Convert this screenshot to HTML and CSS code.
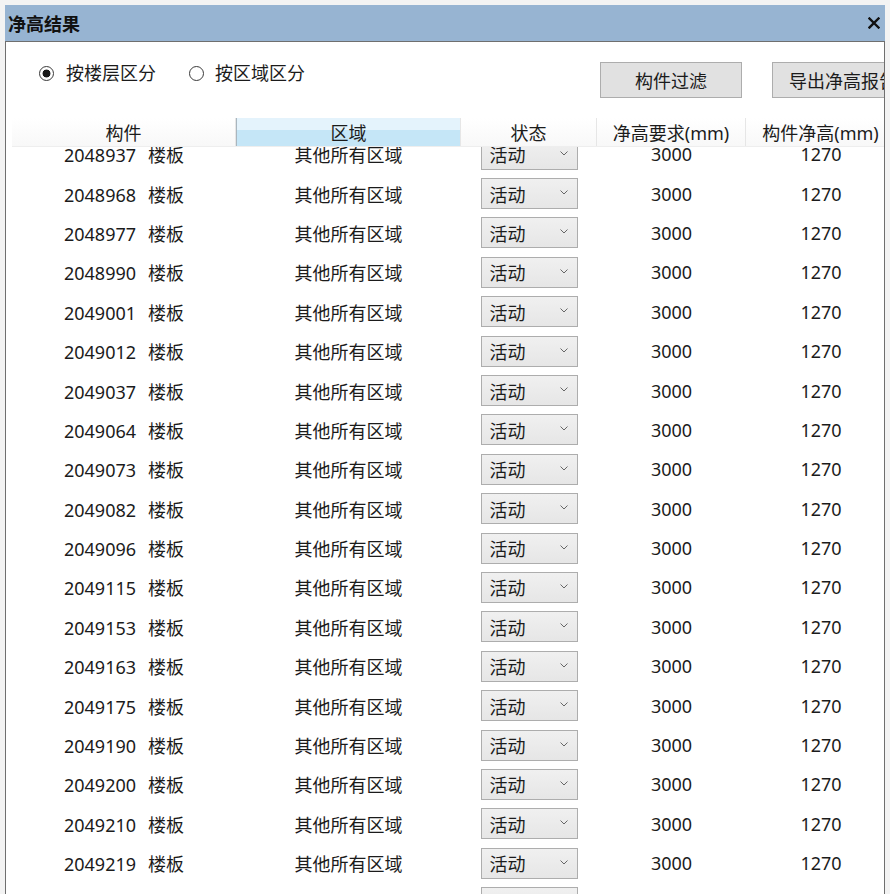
FILE: index.html
```html
<!DOCTYPE html>
<html lang="zh-CN">
<head>
<meta charset="utf-8">
<title>净高结果</title>
<link rel="stylesheet" href="styles.css">
</head>
<body>
<div class="window">
  <div class="titlebar">
    <span class="title">净高结果</span>
    <svg class="close" width="12" height="12" viewBox="0 0 12 12"><path d="M1.5 1.5L10.5 10.5M10.5 1.5L1.5 10.5" stroke="#111" stroke-width="2.4" stroke-linecap="square" fill="none"/></svg>
  </div>
  <div class="content">
    <div class="toolbar">
      <div class="radios">
        <label class="radio"><span class="dot checked"></span>按楼层区分</label>
        <label class="radio"><span class="dot"></span>按区域区分</label>
      </div>
      <div class="buttons">
        <button class="btn">构件过滤</button>
        <button class="btn">导出净高报告</button>
      </div>
    </div>
    <div class="thead">
      <div class="th">构件</div>
      <div class="th active">区域</div>
      <div class="th">状态</div>
      <div class="th">净高要求(mm)</div>
      <div class="th">构件净高(mm)</div>
    </div>
    <div class="tbody">
      <div class="rows">
        <div class="row"><div class="c"><span>2048937</span><span class="kind">楼板</span></div><div class="c">其他所有区域</div><div class="c"><div class="select"><span>活动</span><svg width="8" height="5" viewBox="0 0 8 5"><path d="M0.5 0.5L4 4L7.5 0.5" stroke="#666" stroke-width="1" fill="none"/></svg></div></div><div class="c">3000</div><div class="c">1270</div></div>
        <div class="row"><div class="c"><span>2048968</span><span class="kind">楼板</span></div><div class="c">其他所有区域</div><div class="c"><div class="select"><span>活动</span><svg width="8" height="5" viewBox="0 0 8 5"><path d="M0.5 0.5L4 4L7.5 0.5" stroke="#666" stroke-width="1" fill="none"/></svg></div></div><div class="c">3000</div><div class="c">1270</div></div>
        <div class="row"><div class="c"><span>2048977</span><span class="kind">楼板</span></div><div class="c">其他所有区域</div><div class="c"><div class="select"><span>活动</span><svg width="8" height="5" viewBox="0 0 8 5"><path d="M0.5 0.5L4 4L7.5 0.5" stroke="#666" stroke-width="1" fill="none"/></svg></div></div><div class="c">3000</div><div class="c">1270</div></div>
        <div class="row"><div class="c"><span>2048990</span><span class="kind">楼板</span></div><div class="c">其他所有区域</div><div class="c"><div class="select"><span>活动</span><svg width="8" height="5" viewBox="0 0 8 5"><path d="M0.5 0.5L4 4L7.5 0.5" stroke="#666" stroke-width="1" fill="none"/></svg></div></div><div class="c">3000</div><div class="c">1270</div></div>
        <div class="row"><div class="c"><span>2049001</span><span class="kind">楼板</span></div><div class="c">其他所有区域</div><div class="c"><div class="select"><span>活动</span><svg width="8" height="5" viewBox="0 0 8 5"><path d="M0.5 0.5L4 4L7.5 0.5" stroke="#666" stroke-width="1" fill="none"/></svg></div></div><div class="c">3000</div><div class="c">1270</div></div>
        <div class="row"><div class="c"><span>2049012</span><span class="kind">楼板</span></div><div class="c">其他所有区域</div><div class="c"><div class="select"><span>活动</span><svg width="8" height="5" viewBox="0 0 8 5"><path d="M0.5 0.5L4 4L7.5 0.5" stroke="#666" stroke-width="1" fill="none"/></svg></div></div><div class="c">3000</div><div class="c">1270</div></div>
        <div class="row"><div class="c"><span>2049037</span><span class="kind">楼板</span></div><div class="c">其他所有区域</div><div class="c"><div class="select"><span>活动</span><svg width="8" height="5" viewBox="0 0 8 5"><path d="M0.5 0.5L4 4L7.5 0.5" stroke="#666" stroke-width="1" fill="none"/></svg></div></div><div class="c">3000</div><div class="c">1270</div></div>
        <div class="row"><div class="c"><span>2049064</span><span class="kind">楼板</span></div><div class="c">其他所有区域</div><div class="c"><div class="select"><span>活动</span><svg width="8" height="5" viewBox="0 0 8 5"><path d="M0.5 0.5L4 4L7.5 0.5" stroke="#666" stroke-width="1" fill="none"/></svg></div></div><div class="c">3000</div><div class="c">1270</div></div>
        <div class="row"><div class="c"><span>2049073</span><span class="kind">楼板</span></div><div class="c">其他所有区域</div><div class="c"><div class="select"><span>活动</span><svg width="8" height="5" viewBox="0 0 8 5"><path d="M0.5 0.5L4 4L7.5 0.5" stroke="#666" stroke-width="1" fill="none"/></svg></div></div><div class="c">3000</div><div class="c">1270</div></div>
        <div class="row"><div class="c"><span>2049082</span><span class="kind">楼板</span></div><div class="c">其他所有区域</div><div class="c"><div class="select"><span>活动</span><svg width="8" height="5" viewBox="0 0 8 5"><path d="M0.5 0.5L4 4L7.5 0.5" stroke="#666" stroke-width="1" fill="none"/></svg></div></div><div class="c">3000</div><div class="c">1270</div></div>
        <div class="row"><div class="c"><span>2049096</span><span class="kind">楼板</span></div><div class="c">其他所有区域</div><div class="c"><div class="select"><span>活动</span><svg width="8" height="5" viewBox="0 0 8 5"><path d="M0.5 0.5L4 4L7.5 0.5" stroke="#666" stroke-width="1" fill="none"/></svg></div></div><div class="c">3000</div><div class="c">1270</div></div>
        <div class="row"><div class="c"><span>2049115</span><span class="kind">楼板</span></div><div class="c">其他所有区域</div><div class="c"><div class="select"><span>活动</span><svg width="8" height="5" viewBox="0 0 8 5"><path d="M0.5 0.5L4 4L7.5 0.5" stroke="#666" stroke-width="1" fill="none"/></svg></div></div><div class="c">3000</div><div class="c">1270</div></div>
        <div class="row"><div class="c"><span>2049153</span><span class="kind">楼板</span></div><div class="c">其他所有区域</div><div class="c"><div class="select"><span>活动</span><svg width="8" height="5" viewBox="0 0 8 5"><path d="M0.5 0.5L4 4L7.5 0.5" stroke="#666" stroke-width="1" fill="none"/></svg></div></div><div class="c">3000</div><div class="c">1270</div></div>
        <div class="row"><div class="c"><span>2049163</span><span class="kind">楼板</span></div><div class="c">其他所有区域</div><div class="c"><div class="select"><span>活动</span><svg width="8" height="5" viewBox="0 0 8 5"><path d="M0.5 0.5L4 4L7.5 0.5" stroke="#666" stroke-width="1" fill="none"/></svg></div></div><div class="c">3000</div><div class="c">1270</div></div>
        <div class="row"><div class="c"><span>2049175</span><span class="kind">楼板</span></div><div class="c">其他所有区域</div><div class="c"><div class="select"><span>活动</span><svg width="8" height="5" viewBox="0 0 8 5"><path d="M0.5 0.5L4 4L7.5 0.5" stroke="#666" stroke-width="1" fill="none"/></svg></div></div><div class="c">3000</div><div class="c">1270</div></div>
        <div class="row"><div class="c"><span>2049190</span><span class="kind">楼板</span></div><div class="c">其他所有区域</div><div class="c"><div class="select"><span>活动</span><svg width="8" height="5" viewBox="0 0 8 5"><path d="M0.5 0.5L4 4L7.5 0.5" stroke="#666" stroke-width="1" fill="none"/></svg></div></div><div class="c">3000</div><div class="c">1270</div></div>
        <div class="row"><div class="c"><span>2049200</span><span class="kind">楼板</span></div><div class="c">其他所有区域</div><div class="c"><div class="select"><span>活动</span><svg width="8" height="5" viewBox="0 0 8 5"><path d="M0.5 0.5L4 4L7.5 0.5" stroke="#666" stroke-width="1" fill="none"/></svg></div></div><div class="c">3000</div><div class="c">1270</div></div>
        <div class="row"><div class="c"><span>2049210</span><span class="kind">楼板</span></div><div class="c">其他所有区域</div><div class="c"><div class="select"><span>活动</span><svg width="8" height="5" viewBox="0 0 8 5"><path d="M0.5 0.5L4 4L7.5 0.5" stroke="#666" stroke-width="1" fill="none"/></svg></div></div><div class="c">3000</div><div class="c">1270</div></div>
        <div class="row"><div class="c"><span>2049219</span><span class="kind">楼板</span></div><div class="c">其他所有区域</div><div class="c"><div class="select"><span>活动</span><svg width="8" height="5" viewBox="0 0 8 5"><path d="M0.5 0.5L4 4L7.5 0.5" stroke="#666" stroke-width="1" fill="none"/></svg></div></div><div class="c">3000</div><div class="c">1270</div></div>
        <div class="row"><div class="c"><span>2049232</span><span class="kind">楼板</span></div><div class="c">其他所有区域</div><div class="c"><div class="select"><span>活动</span><svg width="8" height="5" viewBox="0 0 8 5"><path d="M0.5 0.5L4 4L7.5 0.5" stroke="#666" stroke-width="1" fill="none"/></svg></div></div><div class="c">3000</div><div class="c">1270</div></div>
      </div>
    </div>
  </div>
</div>
</body>
</html>
```

FILE: styles.css
```css
html, body {
  margin: 0;
  height: 100%;
  overflow: hidden;
}

body {
  box-sizing: border-box;
  height: 894px;
  padding: 5px 0 0 5px;
  background: #f3f3f3;
  font-family: "Noto Sans", "Noto Sans CJK SC", sans-serif;
  color: #1b1b1b;
}

.window {
  width: 880px;
  height: 889px;
  display: flex;
  flex-direction: column;
}

.titlebar {
  flex: none;
  height: 36px;
  background: #97b4d2;
  display: flex;
  align-items: center;
  justify-content: space-between;
  padding: 0 5px 0 3px;
}

.title {
  font-family: "Noto Sans CJK SC", sans-serif;
  font-weight: bold;
  font-size: 18px;
  color: #111;
}

.close {
  display: block;
}

.content {
  flex: 1;
  min-height: 0;
  background: #fff;
  border: 1px solid #6f6f6f;
  border-bottom: none;
  display: flex;
  flex-direction: column;
  overflow: hidden;
}

.toolbar {
  flex: none;
  height: 76px;
  display: flex;
  padding-left: 33px;
}

.radios {
  flex: 0 0 561px;
  height: 22px;
  margin-top: 20px;
  display: flex;
  align-items: center;
}

.radio {
  display: flex;
  align-items: center;
  gap: 12px;
  font-size: 18px;
  line-height: 22px;
}

.radio + .radio {
  margin-left: 33px;
}

.radio + .radio .dot {
  margin-right: -1px;
}

.dot {
  width: 15px;
  height: 15px;
  box-sizing: border-box;
  border-radius: 50%;
  border: 1px solid #3a3a3a;
  background: #fff;
}

.dot.checked {
  background: radial-gradient(circle, #1a1a1a 0 3.6px, #fff 4.3px);
}

.buttons {
  flex: none;
  display: flex;
  gap: 30px;
  margin-top: 20px;
}

.btn {
  flex: none;
  width: 142px;
  height: 36px;
  padding: 0;
  border: 1px solid #adadad;
  background: #e1e1e1;
  font-family: inherit;
  font-size: 18px;
  color: #1b1b1b;
  white-space: nowrap;
  overflow: hidden;
}

.thead {
  flex: none;
  display: grid;
  grid-template-columns: 224px 225px 136px 149px 150px;
  height: 29px;
  margin-left: 6px;
  border-bottom: 1px solid #eeeeee;
  box-sizing: border-box;
}

.th {
  display: flex;
  align-items: center;
  justify-content: center;
  font-size: 18px;
  background: linear-gradient(#ffffff, #f8f8f8);
  border-right: 1px solid #e6e6e6;
  box-sizing: border-box;
  white-space: nowrap;
}

.th.active {
  background: linear-gradient(#e4f3fc 0 42%, #c5e6f7 42%);
  border-left: 1px solid #a9b6bf;
}

.tbody {
  flex: 1;
  min-height: 0;
  overflow: hidden;
}

.rows {
  margin-top: -12.5px;
}

.row {
  display: grid;
  grid-template-columns: 224px 225px 136px 149px 150px;
  height: 39.4px;
  margin-left: 6px;
  align-items: center;
}

.c {
  text-align: center;
  font-size: 18px;
  white-space: nowrap;
}

.kind {
  margin-left: 12px;
}

.select {
  width: 97px;
  height: 31px;
  margin: 0 auto;
  box-sizing: border-box;
  border: 1px solid #adadad;
  background: linear-gradient(#f0f0f0, #e6e6e6);
  display: flex;
  align-items: center;
  justify-content: space-between;
  padding: 0 9px 0 8px;
  font-size: 18px;
}

.select svg {
  display: block;
  margin-top: -2px;
}
```
